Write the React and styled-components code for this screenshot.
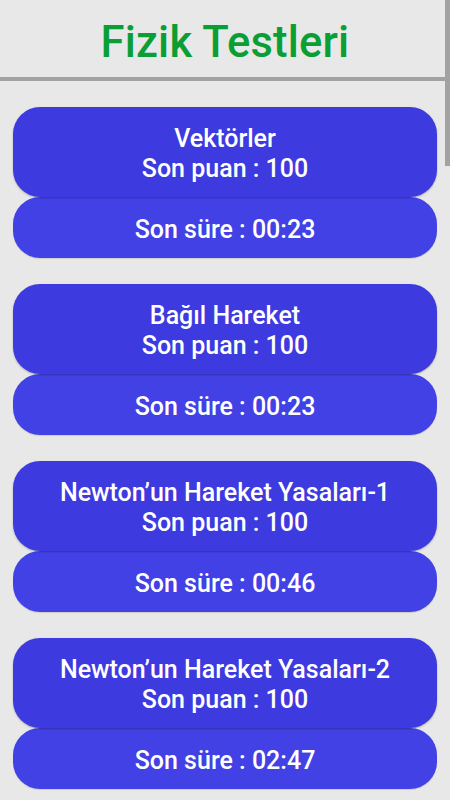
import React from 'react';
import styled, { createGlobalStyle } from 'styled-components';

const GlobalStyle = createGlobalStyle`
  html, body {
    margin: 0;
    padding: 0;
    background: #e8e8e8;
    font-family: Roboto, "Noto Sans", sans-serif;
  }
`;

const Page = styled.div`
  position: relative;
  width: 450px;
  height: 800px;
  overflow: hidden;
  background: #e8e8e8;
`;
const Header = styled.header`
  height: 81px;
  display: flex;
  align-items: center;
  justify-content: center;
  padding-top: 8px;
  box-sizing: border-box;
  border-bottom: 4px solid #a0a4a0;
`;
const Title = styled.h1`
  margin: 0;
  font-size: 43.5px;
  font-weight: 500;
  color: #0a9e34;
  letter-spacing: 0.2px;
`;
const List = styled.div`
  display: flex;
  flex-direction: column;
  gap: 26px;
  padding: 26px 13px 0;
`;
const Group = styled.div`
  display: flex;
  flex-direction: column;
`;
const Card = styled.div`
  height: ${({ tall }) => (tall ? '90px' : '61px')};
  box-sizing: border-box;
  padding-top: 4px;
  border-radius: 27px;
  background: ${({ tall }) => (tall ? '#3d3ae0' : '#4141e6')};
  box-shadow: ${({ tall }) => (tall ? '0 1px 2px rgba(0,0,0,0.25)' : '0 1px 1px rgba(0,0,0,0.12)')};
  position: relative;
  z-index: ${({ tall }) => (tall ? 1 : 0)};
  color: #fff;
  display: flex;
  flex-direction: column;
  align-items: center;
  justify-content: center;
  text-align: center;
  font-weight: 500;
  font-size: 25px;
  line-height: 30px;
`;
const Scroll = styled.div`
  position: absolute;
  top: 0;
  right: 0;
  width: 5px;
  height: 166px;
  background: #a2a2a2;
`;

const tests = [
  { name: 'Vektörler', score: 100, time: '00:23' },
  { name: 'Bağıl Hareket', score: 100, time: '00:23' },
  { name: 'Newton’un Hareket Yasaları-1', score: 100, time: '00:46' },
  { name: 'Newton’un Hareket Yasaları-2', score: 100, time: '02:47' },
];

export default function App() {
  return (
    <Page>
      <GlobalStyle />
      <Header>
        <Title>Fizik Testleri</Title>
      </Header>
      <List>
        {tests.map((t) => (
          <Group key={t.name}>
            <Card tall>
              <div>{t.name}</div>
              <div>Son puan : {t.score}</div>
            </Card>
            <Card>Son süre : {t.time}</Card>
          </Group>
        ))}
      </List>
      <Scroll />
    </Page>
  );
}
